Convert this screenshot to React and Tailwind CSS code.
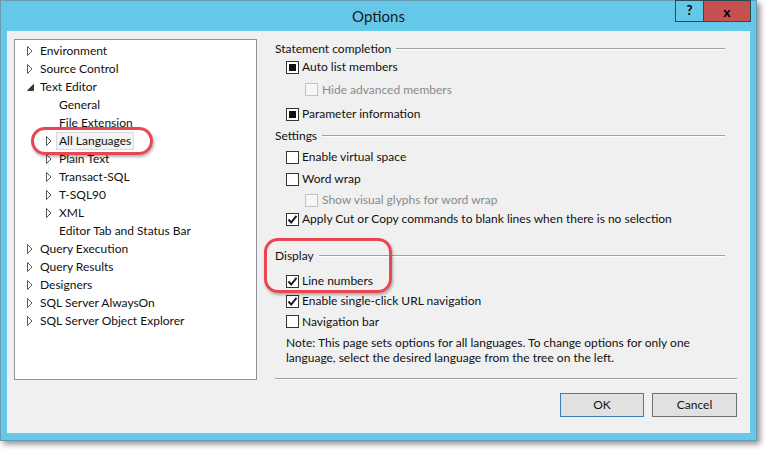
import React from 'react';

const treeItems = [
  { label: 'Environment', level: 0, exp: 'closed' },
  { label: 'Source Control', level: 0, exp: 'closed' },
  { label: 'Text Editor', level: 0, exp: 'open' },
  { label: 'General', level: 1 },
  { label: 'File Extension', level: 1 },
  { label: 'All Languages', level: 1, exp: 'closed', selected: true },
  { label: 'Plain Text', level: 1, exp: 'closed' },
  { label: 'Transact-SQL', level: 1, exp: 'closed' },
  { label: 'T-SQL90', level: 1, exp: 'closed' },
  { label: 'XML', level: 1, exp: 'closed' },
  { label: 'Editor Tab and Status Bar', level: 1 },
  { label: 'Query Execution', level: 0, exp: 'closed' },
  { label: 'Query Results', level: 0, exp: 'closed' },
  { label: 'Designers', level: 0, exp: 'closed' },
  { label: 'SQL Server AlwaysOn', level: 0, exp: 'closed' },
  { label: 'SQL Server Object Explorer', level: 0, exp: 'closed' },
];

const Expander = ({ state }) => {
  if (state === 'closed') {
    return (
      <svg width="6" height="10" viewBox="0 0 6 10">
        <path d="M0.5 0.5 L5 5 L0.5 9.5 Z" fill="none" stroke="#595959" strokeWidth="1" />
      </svg>
    );
  }
  if (state === 'open') {
    return (
      <svg width="7" height="7" viewBox="0 0 7 7">
        <path d="M6.5 0.5 L6.5 6.5 L0.5 6.5 Z" fill="#3c3c3c" stroke="#3c3c3c" strokeWidth="1" />
      </svg>
    );
  }
  return null;
};

const TreeRow = ({ item }) => (
  <div className={`flex items-center h-[18px] ${item.level === 1 ? 'pl-[31px]' : 'pl-[12px]'}`}>
    <span className="w-[10px] flex items-center">
      <Expander state={item.exp} />
    </span>
    <span
      className={`px-[2px] leading-[16px] border ${
        item.selected ? 'bg-[#f3f3f3] border-[#d9d9d9]' : 'border-transparent'
      }`}
    >
      {item.label}
    </span>
  </div>
);

const CheckBox = ({ state }) => {
  // state: 'checked' | 'square' | 'empty' | 'disabled'
  const disabled = state === 'disabled';
  return (
    <span
      className={`w-[13px] h-[13px] flex items-center justify-center border ${
        disabled ? 'border-[#c4c4c4] bg-[#f7f7f7]' : 'border-[#333333] bg-white'
      }`}
    >
      {state === 'square' && <span className="w-[7px] h-[7px] bg-[#111]" />}
      {state === 'checked' && (
        <svg width="11" height="11" viewBox="0 0 11 11">
          <path d="M1.5 5.5 L4.2 8.5 L9.5 1.8" fill="none" stroke="#1a1a1a" strokeWidth="2" />
        </svg>
      )}
    </span>
  );
};

const Option = ({ label, state, indent = false, className = '' }) => (
  <div className={`flex items-center gap-[2px] ${indent ? 'pl-[30px]' : 'pl-[11px]'} ${className}`}>
    <CheckBox state={state} />
    <span className={state === 'disabled' ? 'text-[#8a8a8a] ml-[2px]' : 'text-[#111] ml-[1px]'}>{label}</span>
  </div>
);

const Heading = ({ title, className = '' }) => (
  <div className={`flex items-center ${className}`}>
    <span className="text-[#111]">{title}</span>
    <div className="flex-1 ml-[5px] mr-[12px] h-[2px] border-t border-[#a0a0a0] border-b border-b-white" />
  </div>
);

export default function App() {
  return (
    <div
      className="relative w-[766px] h-[449px] bg-white text-[12px] text-[#111] overflow-hidden"
      style={{ fontFamily: 'Lato, "Liberation Sans", sans-serif' }}
    >
      {/* window frame */}
      <div className="w-[757px] h-[441px] border border-[#6a9bb1] bg-[#65c8e9] flex flex-col shadow-[3px_3px_6px_rgba(0,0,0,0.45)]">
        {/* title bar */}
        <div className="relative h-[30px] flex items-center justify-center shrink-0">
          <span className="text-[15px] text-[#1a1a1a]">Options</span>
          <div className="absolute top-[-1px] right-[5px] flex h-[22px] border border-[#2d4a57]">
            <div className="w-[28px] flex items-center justify-center text-[13px] font-bold text-black border-r border-[#2d4a57]">
              ?
            </div>
            <div className="w-[46px] flex items-center justify-center bg-[#c75050] text-[14px] font-bold text-black">
              x
            </div>
          </div>
        </div>

        {/* client area */}
        <div className="mx-[6px] h-[402px] bg-[#f0f0f0] flex flex-col">
          <div className="flex pt-[8px]">
            {/* tree */}
            <div className="ml-[7px] w-[243px] h-[341px] border border-[#8f9399] bg-white pt-[2px]">
              {treeItems.map((item) => (
                <TreeRow key={item.label} item={item} />
              ))}
            </div>

            {/* options pane */}
            <div className="ml-[18px] w-[462px] h-[341px] flex flex-col pt-[1px]">
              <Heading title="Statement completion" className="h-[17px]" />
              <Option label="Auto list members" state="square" className="h-[20px]" />
              <Option label="Hide advanced members" state="disabled" indent className="h-[25px]" />
              <Option label="Parameter information" state="square" className="h-[24px]" />
              <Heading title="Settings" className="h-[20px]" />
              <Option label="Enable virtual space" state="empty" className="h-[22px]" />
              <Option label="Word wrap" state="empty" className="h-[22px]" />
              <Option label="Show visual glyphs for word wrap" state="disabled" indent className="h-[20px]" />
              <Option
                label="Apply Cut or Copy commands to blank lines when there is no selection"
                state="checked"
                className="h-[18px]"
              />
              <Heading title="Display" className="h-[20px] mt-[18px]" />
              <Option label="Line numbers" state="checked" className="h-[20px] mt-[5px]" />
              <Option label="Enable single-click URL navigation" state="checked" className="h-[20px]" />
              <Option label="Navigation bar" state="empty" className="h-[21px]" />
              <p className="pl-[11px] mt-[3px] leading-[15px] text-[#111]">
                Note: This page sets options for all languages. To change options for only one
                <br />
                language, select the desired language from the tree on the left.
              </p>
              <div className="mt-auto h-[2px] border-t border-[#a0a0a0] border-b border-b-white" />
            </div>
          </div>

          {/* buttons */}
          <div className="flex justify-end gap-[8px] pr-[13px] mt-[13px]">
            <button className="w-[84px] h-[24px] border border-[#3c7fb1] bg-[#e1e1e1] text-[#111]">OK</button>
            <button className="w-[85px] h-[24px] border border-[#707070] bg-[#e1e1e1] text-[#111]">Cancel</button>
          </div>
        </div>
      </div>

      {/* red annotation outlines */}
      <div className="absolute left-[31px] top-[127px] w-[122px] h-[28px] rounded-[14px] border-[3px] border-[#e84650] shadow-[1px_2px_3px_rgba(0,0,0,0.3)]" />
      <div className="absolute left-[264px] top-[238px] w-[128px] h-[55px] rounded-[14px] border-[3px] border-[#e84650] shadow-[1px_2px_3px_rgba(0,0,0,0.3)]" />
    </div>
  );
}
